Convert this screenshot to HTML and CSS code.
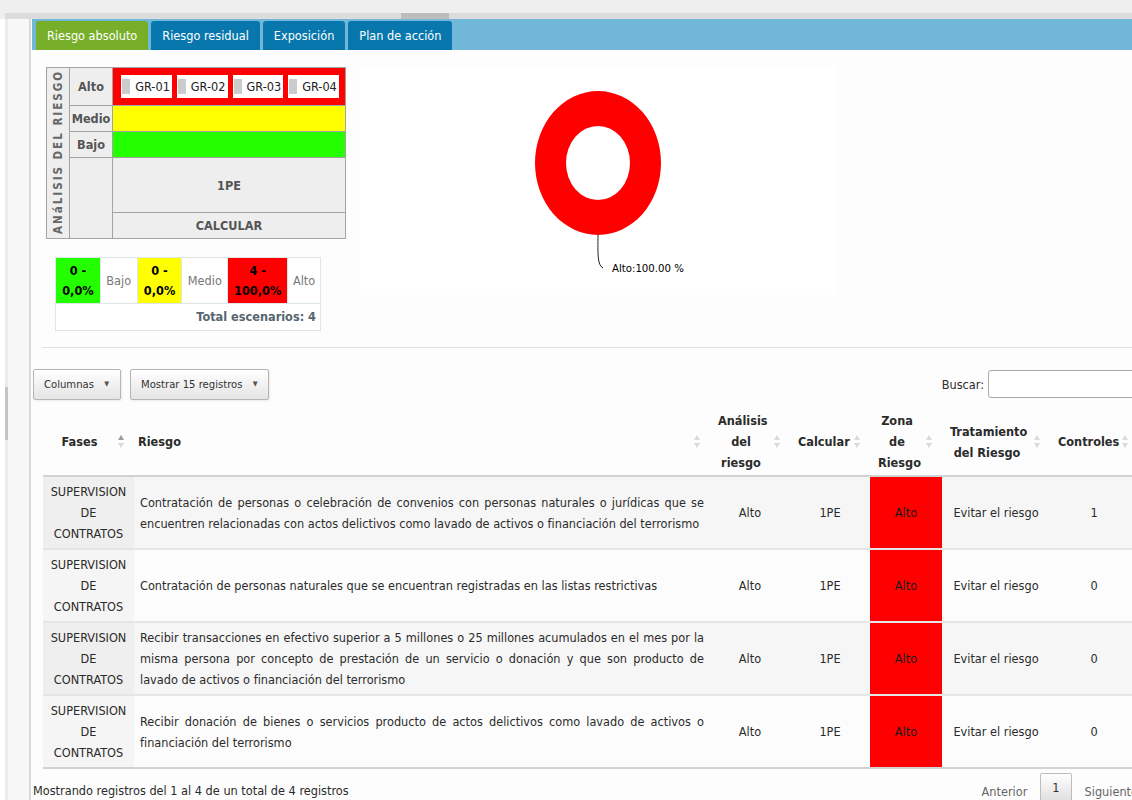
FILE: index.html
```html
<!DOCTYPE html>
<html lang="es">
<head>
<meta charset="utf-8">
<title>Riesgo absoluto</title>
<link rel="stylesheet" href="styles.css">
</head>
<body>
<div class="hscroll"><div class="hscroll-track"><div class="hscroll-thumb"></div></div></div>
<div class="shell">
  <aside class="gutter">
    <div class="gutter-rail"><div class="gutter-thumb"></div></div>
    <div class="gutter-fill"></div>
  </aside>
  <main class="main">
    <nav class="tabs">
      <span class="tab active">Riesgo absoluto</span>
      <span class="tab">Riesgo residual</span>
      <span class="tab">Exposición</span>
      <span class="tab">Plan de acción</span>
    </nav>

    <section class="overview">
      <div class="risk-col">
        <table class="matrix">
          <tr class="m-alto">
            <td class="m-axis" rowspan="5"><span>ANáLISIS DEL RIESGO</span></td>
            <th class="m-level">Alto</th>
            <td class="m-zone z-red">
              <div class="chips">
                <span class="chip"><i></i>GR-01</span>
                <span class="chip"><i></i>GR-02</span>
                <span class="chip"><i></i>GR-03</span>
                <span class="chip"><i></i>GR-04</span>
              </div>
            </td>
          </tr>
          <tr class="m-medio">
            <th class="m-level">Medio</th>
            <td class="m-zone z-yellow"></td>
          </tr>
          <tr class="m-bajo">
            <th class="m-level">Bajo</th>
            <td class="m-zone z-green"></td>
          </tr>
          <tr class="m-pe">
            <td class="m-blank" rowspan="2"></td>
            <td class="m-foot">1PE</td>
          </tr>
          <tr class="m-calc">
            <td class="m-foot">CALCULAR</td>
          </tr>
        </table>

        <table class="summary">
          <tr class="s-top">
            <td class="s-val z-green">0 -<br>0,0%</td>
            <td class="s-lbl s-bajo">Bajo</td>
            <td class="s-val z-yellow">0 -<br>0,0%</td>
            <td class="s-lbl s-medio">Medio</td>
            <td class="s-val s-wide z-red">4 -<br>100,0%</td>
            <td class="s-lbl s-alto">Alto</td>
          </tr>
          <tr>
            <td class="s-total" colspan="6">Total escenarios: 4</td>
          </tr>
        </table>
      </div>

      <div class="chart">
        <svg width="477" height="228" viewBox="0 0 477 228">
          <path fill="#ff0000" fill-rule="evenodd"
                d="M176 96 a63 72 0 1 0 126 0 a63 72 0 1 0 -126 0 Z M207 96 a32 37 0 1 0 64 0 a32 37 0 1 0 -64 0 Z"/>
          <path d="M239 168 C239 186 238 198 244 201" fill="none" stroke="#222" stroke-width="1"/>
          <text x="253" y="205" class="chart-label">Alto:100.00 %</text>
        </svg>
      </div>
    </section>

    <hr class="rule">

    <div class="dt">
      <div class="dt-controls">
        <div class="dt-buttons">
          <button class="btn">Columnas <span class="caret">▼</span></button>
          <button class="btn">Mostrar 15 registros <span class="caret">▼</span></button>
        </div>
        <label class="dt-search">Buscar: <input type="search"></label>
      </div>

      <table class="grid">
        <colgroup>
          <col class="c-fase"><col class="c-riesgo"><col class="c-analisis"><col class="c-calc"><col class="c-zona"><col class="c-trat"><col class="c-ctrl">
        </colgroup>
        <thead>
          <tr>
            <th class="sorted">Fases<span class="sort asc"></span></th>
            <th class="h-left">Riesgo<span class="sort"></span></th>
            <th>Análisis<br>del<br>riesgo<span class="sort"></span></th>
            <th>Calcular<span class="sort"></span></th>
            <th>Zona<br>de<br>Riesgo<span class="sort"></span></th>
            <th>Tratamiento<br>del Riesgo<span class="sort"></span></th>
            <th>Controles<span class="sort"></span></th>
          </tr>
        </thead>
        <tbody>
          <tr>
            <td class="fase">SUPERVISION<br>DE<br>CONTRATOS</td>
            <td class="desc">Contratación de personas o celebración de convenios con personas naturales o jurídicas que se encuentren relacionadas con actos delictivos como lavado de activos o financiación del terrorismo</td>
            <td>Alto</td>
            <td>1PE</td>
            <td class="zona">Alto</td>
            <td>Evitar el riesgo</td>
            <td>1</td>
          </tr>
          <tr>
            <td class="fase">SUPERVISION<br>DE<br>CONTRATOS</td>
            <td class="desc">Contratación de personas naturales que se encuentran registradas en las listas restrictivas</td>
            <td>Alto</td>
            <td>1PE</td>
            <td class="zona">Alto</td>
            <td>Evitar el riesgo</td>
            <td>0</td>
          </tr>
          <tr>
            <td class="fase">SUPERVISION<br>DE<br>CONTRATOS</td>
            <td class="desc">Recibir transacciones en efectivo superior a 5 millones o 25 millones acumulados en el mes por la misma persona por concepto de prestación de un servicio o donación y que son producto de lavado de activos o financiación del terrorismo</td>
            <td>Alto</td>
            <td>1PE</td>
            <td class="zona">Alto</td>
            <td>Evitar el riesgo</td>
            <td>0</td>
          </tr>
          <tr>
            <td class="fase">SUPERVISION<br>DE<br>CONTRATOS</td>
            <td class="desc">Recibir donación de bienes o servicios producto de actos delictivos como lavado de activos o financiación del terrorismo</td>
            <td>Alto</td>
            <td>1PE</td>
            <td class="zona">Alto</td>
            <td>Evitar el riesgo</td>
            <td>0</td>
          </tr>
        </tbody>
      </table>

      <div class="dt-footer">
        <div class="dt-info">Mostrando registros del 1 al 4 de un total de 4 registros</div>
        <div class="dt-pages">
          <span class="page-link">Anterior</span>
          <span class="page-link current">1</span>
          <span class="page-link">Siguiente</span>
        </div>
      </div>
    </div>
  </main>
</div>
</body>
</html>
```

FILE: styles.css
```css
html {
  overflow: hidden;
}

body {
  margin: 0;
  width: 1132px;
  font-family: "DejaVu Sans Condensed", "DejaVu Sans", sans-serif;
  font-stretch: semi-condensed;
  font-size: 12.6px;
  color: #2b2b2b;
  background: #fff;
}

/* window chrome: horizontal scroller above the frame */
.hscroll {
  height: 19px;
  box-sizing: border-box;
  padding-top: 13px;
  background: #efefef;
}

.hscroll-track {
  height: 6px;
  margin-left: 5px;
  background: #dcdcdc;
}

.hscroll-thumb {
  width: 48px;
  height: 6px;
  margin-left: 396px;
  background: #bdbdbd;
}

.shell {
  display: flex;
  align-items: stretch;
}

/* left gutter with its own scrollbar */
.gutter {
  display: flex;
  width: 31px;
  flex: none;
  box-sizing: border-box;
  padding-left: 5px;
  border-right: 2px solid #d9d9d9;
  background: #fff;
}

.gutter-rail {
  width: 3px;
  background: #ebebeb;
}

.gutter-thumb {
  height: 53px;
  margin-top: 368px;
  background: #c4c4c4;
}

.gutter-fill {
  flex: 1;
  background: #f7f7f7;
}

.main {
  flex: 1;
  min-width: 0;
  background: #fdfdfd;
}

/* tabs */
.tabs {
  display: flex;
  gap: 3px;
  height: 31px;
  box-sizing: border-box;
  padding: 2px 0 0 4px;
  margin-left: 1px;
  background: #71b7d7;
}

.tab {
  padding: 0 11px;
  line-height: 29px;
  color: #fff;
  background: #0877ad;
  border-radius: 3px 3px 0 0;
  white-space: nowrap;
}

.tab.active {
  background: #77af2a;
}

/* overview: heat matrix + donut */
.overview {
  display: flex;
  align-items: flex-start;
  padding: 17px 0 0 15px;
}

.risk-col {
  width: 313px;
  flex: none;
}

.matrix {
  width: 300px;
  border-collapse: collapse;
  border: 1px solid #8f8f8f;
  background: #eeeeee;
}

.matrix td,
.matrix th {
  border: 1px solid #a3a3a3;
  padding: 0;
  text-align: center;
  font-weight: bold;
  color: #555;
}

.m-alto { height: 38px; }
.m-medio { height: 26px; }
.m-bajo { height: 26px; }
.m-pe { height: 55px; }
.m-calc { height: 26px; }

.m-axis {
  width: 22px;
  vertical-align: middle;
}

.m-axis span {
  display: inline-block;
  writing-mode: vertical-rl;
  transform: rotate(180deg);
  font-size: 11.5px;
  letter-spacing: 2px;
  color: #676767;
}

.m-level {
  width: 42px;
}

.m-foot {
  color: #666;
}

.z-red { background: #ff0000; }
.z-yellow { background: #ffff00; }
.z-green { background: #24ff00; }

.chips {
  display: flex;
  justify-content: center;
  gap: 5px;
  padding-left: 2px;
}

.chip {
  display: flex;
  align-items: center;
  gap: 5px;
  height: 23px;
  padding: 0 2px 0 1px;
  background: #fff;
  font-weight: normal;
  color: #222;
}

.chip i {
  display: block;
  width: 8px;
  height: 15px;
  background: #cccccc;
}

.summary {
  margin: 18px 0 0 9px;
  width: 266px;
  border-collapse: collapse;
  border: 1px solid #d4e0e4;
  background: #fff;
}

.summary td {
  padding: 0;
  border: 1px solid #dde7ea;
  text-align: center;
  line-height: 20px;
}

.s-top {
  height: 46px;
}

.s-val {
  width: 44px;
  font-weight: bold;
  color: #000;
}

.s-wide {
  width: 59px;
}

.s-lbl {
  color: #777;
}

.s-bajo { width: 36px; }
.s-medio { width: 45px; }
.s-alto { width: 32px; }

.summary td.s-total {
  height: 26px;
  text-align: right;
  padding-right: 4px;
  font-weight: bold;
  color: #56656f;
}

.chart {
  width: 477px;
  height: 228px;
  background: #fff;
}

.chart svg {
  display: block;
}

.chart-label {
  font-family: "DejaVu Sans Condensed", "DejaVu Sans", sans-serif;
  font-stretch: semi-condensed;
  font-size: 11.3px;
  fill: #000;
}

.rule {
  margin: 16px 0 0 11px;
  border: 0;
  border-top: 1px solid #e2e2e2;
  height: 0;
}

/* data table */
.dt {
  width: 1118px;
  margin-left: 2px;
}

.dt-controls {
  display: flex;
  justify-content: space-between;
  align-items: center;
  margin-top: 21px;
  height: 30px;
}

.dt-buttons {
  display: flex;
  gap: 9px;
}

.btn {
  height: 31px;
  padding: 0 11px 0 10px;
  font: inherit;
  font-size: 11.2px;
  color: #333;
  border: 1px solid #b5b5b5;
  border-radius: 2px;
  background: linear-gradient(#ffffff, #e4e4e4);
  box-shadow: 1px 1px 2px rgba(0, 0, 0, 0.08);
}

.caret {
  margin-left: 7px;
  font-size: 7px;
  color: #555;
  vertical-align: 2px;
}

.dt-search {
  display: flex;
  align-items: center;
  gap: 4px;
  font-size: 12.6px;
}

.dt-search input {
  width: 163px;
  height: 28px;
  box-sizing: border-box;
  border: 1px solid #aaa;
  border-radius: 3px;
  background: #fff;
}

.grid {
  margin: 9px 0 0 10px;
  width: 1095px;
  table-layout: fixed;
  border-collapse: collapse;
}

.c-fase { width: 91px; }
.c-riesgo { width: 576px; }
.c-analisis { width: 80px; }
.c-calc { width: 80px; }
.c-zona { width: 72px; }
.c-trat { width: 108px; }
.c-ctrl { width: 88px; }

.grid th {
  position: relative;
  height: 67px;
  padding: 0 26px 0 8px;
  line-height: 21px;
  font-weight: bold;
  text-align: center;
  white-space: nowrap;
  color: #2b2b2b;
  border-bottom: 2px solid #d2d2d2;
  background: #fdfdfd;
}

.grid th.h-left {
  text-align: left;
  padding-left: 4px;
}

.sort {
  position: absolute;
  right: 10px;
  top: 50%;
  width: 6px;
  height: 13px;
  margin-top: -7px;
}

.sort::before,
.sort::after {
  content: "";
  position: absolute;
  left: 0;
  border-left: 3px solid transparent;
  border-right: 3px solid transparent;
}

.sort::before {
  top: 0;
  border-bottom: 5px solid #dadada;
}

.sort::after {
  bottom: 0;
  border-top: 5px solid #dadada;
}

.sort.asc::before {
  border-bottom-color: #9c9c9c;
}

.grid td {
  padding: 4px 6px;
  line-height: 21px;
  text-align: center;
  vertical-align: middle;
  border-bottom: 2px solid #e6e6e6;
}

.grid tbody tr:nth-child(odd) td {
  background: #f6f6f6;
}

.grid tbody tr:nth-child(even) td {
  background: #fcfcfc;
}

.grid tbody tr:nth-child(odd) td.fase {
  background: #efefef;
}

.grid tbody tr:nth-child(even) td.fase {
  background: #f5f5f5;
}

.grid tbody tr:last-child td {
  border-bottom-color: #d2d2d2;
}

.grid td.desc {
  text-align: justify;
}

.grid tbody tr td.zona {
  background: #ff0000;
  color: #1a1a1a;
}

.dt-footer {
  display: flex;
  justify-content: space-between;
  align-items: flex-start;
}

.dt-info {
  padding-top: 14px;
}

.dt-pages {
  display: flex;
  align-items: flex-start;
  padding-top: 4px;
  color: #666;
}

.page-link {
  padding: 5px 13px 0;
  line-height: 28px;
}

.page-link.current {
  padding: 0 11px;
  color: #333;
  border: 1px solid #bdbdbd;
  border-radius: 2px;
  background: linear-gradient(#ffffff, #dedede);
}
```
